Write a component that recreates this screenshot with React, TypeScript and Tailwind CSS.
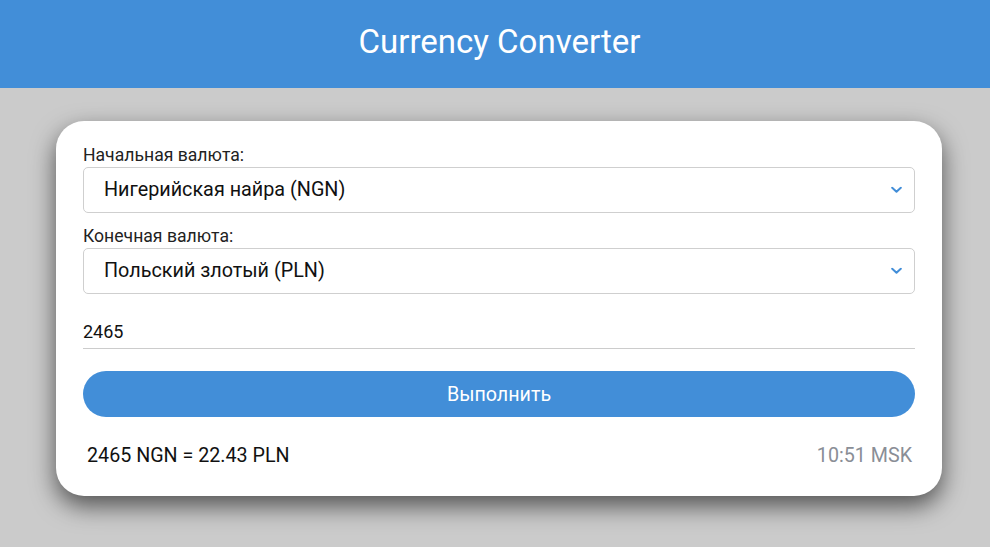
import { useState } from 'react';

function Chevron() {
  return (
    <svg width="11" height="7" viewBox="0 0 11 7" className="absolute right-[12px] top-1/2 -translate-y-1/2 pointer-events-none">
      <path d="M1.2 1.2 L5.5 5.3 L9.8 1.2" fill="none" stroke="#428ed8" strokeWidth="2" strokeLinecap="round" strokeLinejoin="round" />
    </svg>
  );
}

function CurrencySelect({ label, value }: { label: string; value: string }) {
  return (
    <div className="flex flex-col">
      <label className="text-[17.6px] leading-[20px] text-[#222] mb-[2px]">{label}</label>
      <div className="relative h-[46px] border border-[#cfcfcf] rounded-[5px] bg-white flex items-center pl-[20px]">
        <span className="text-[19.8px] text-[#111]">{value}</span>
        <Chevron />
      </div>
    </div>
  );
}

export default function App() {
  const [amount, setAmount] = useState('2465');

  return (
    <div className="min-h-[547px] bg-[#cbcbcb] font-['Roboto',sans-serif]">
      {/* Header */}
      <header className="h-[88px] bg-[#428ed8] flex items-center justify-center pl-[9px]">
        <h1 className="text-[33px] text-white pb-[4px]">Currency Converter</h1>
      </header>

      {/* Card */}
      <main className="pt-[33px] pl-[56px] pr-[48px]">
        <div className="bg-white rounded-[28px] shadow-[0_10px_24px_rgba(0,0,0,0.6)] px-[27px] pt-[24px] pb-[26px] flex flex-col">
          <CurrencySelect label="Начальная валюта:" value="Нигерийская найра (NGN)" />
          <div className="mt-[13px]">
            <CurrencySelect label="Конечная валюта:" value="Польский злотый (PLN)" />
          </div>

          <input
            value={amount}
            onChange={(e) => setAmount(e.target.value)}
            className="mt-[16px] h-[39px] border-b border-[#cccccc] text-[18px] text-[#111] outline-none bg-transparent pt-[4px]"
          />

          <button className="mt-[22px] h-[46px] rounded-full bg-[#428ed8] text-white text-[19.7px] pt-[1px]">
            Выполнить
          </button>

          <div className="mt-[25px] flex justify-between items-center pl-[4px] pr-[3px] text-[19.7px] leading-[28px]">
            <span className="text-[#111]">2465 NGN = 22.43 PLN</span>
            <span className="text-[#8a8e96]">10:51 MSK</span>
          </div>
        </div>
      </main>
    </div>
  );
}
